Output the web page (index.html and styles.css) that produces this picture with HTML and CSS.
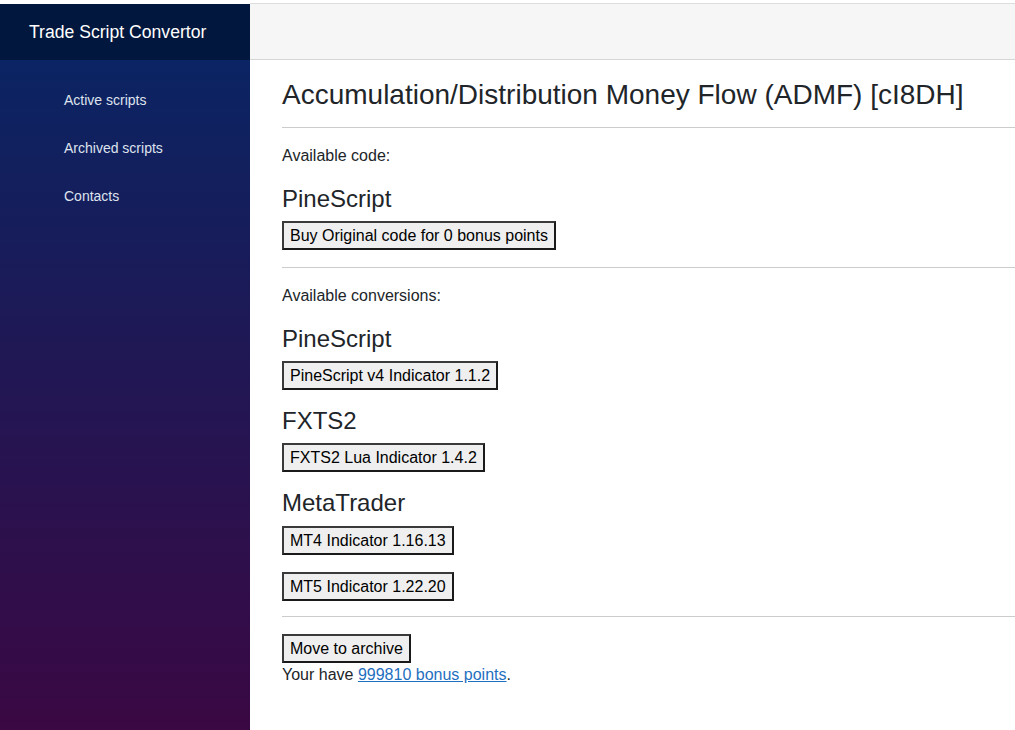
FILE: index.html
```html
<!DOCTYPE html>
<html lang="en">
<head>
<meta charset="utf-8">
<title>Trade Script Convertor</title>
<link rel="stylesheet" href="styles.css">
</head>
<body>
<div class="layout">
  <aside class="sidebar">
    <div class="brand">Trade Script Convertor</div>
    <nav class="nav">
      <a class="nav-link" href="#">Active scripts</a>
      <a class="nav-link" href="#">Archived scripts</a>
      <a class="nav-link" href="#">Contacts</a>
    </nav>
  </aside>
  <div class="main">
    <header class="topbar"></header>
    <main class="content">
      <h1 class="title">Accumulation/Distribution Money Flow (ADMF) [cI8DH]</h1>
      <hr class="rule">
      <p class="label">Available code:</p>
      <h3 class="platform">PineScript</h3>
      <div class="btn-row"><button class="btn">Buy Original code for 0 bonus points</button></div>
      <hr class="rule">
      <p class="label">Available conversions:</p>
      <h3 class="platform">PineScript</h3>
      <div class="btn-row"><button class="btn">PineScript v4 Indicator 1.1.2</button></div>
      <h3 class="platform">FXTS2</h3>
      <div class="btn-row"><button class="btn">FXTS2 Lua Indicator 1.4.2</button></div>
      <h3 class="platform">MetaTrader</h3>
      <div class="btn-row"><button class="btn">MT4 Indicator 1.16.13</button></div>
      <div class="btn-row btn-row-last"><button class="btn">MT5 Indicator 1.22.20</button></div>
      <hr class="rule">
      <div class="footer-row"><button class="btn">Move to archive</button></div>
      <div class="points">Your have <a class="link" href="#">999810 bonus points</a>.</div>
    </main>
  </div>
</div>
</body>
</html>
```

FILE: styles.css
```css
html, body {
  margin: 0;
  padding: 0;
  background: #ffffff;
  font-family: "Liberation Sans", Arial, sans-serif;
  color: #212529;
  overflow: hidden;
}

.layout {
  display: flex;
  padding-top: 3px;
  height: 727px;
}

.sidebar {
  width: 250px;
  flex: 0 0 250px;
  margin-top: 1px;
  display: flex;
  flex-direction: column;
}

.brand {
  height: 56px;
  background: #02173d;
  color: #ffffff;
  font-size: 17.6px;
  display: flex;
  align-items: center;
  padding-left: 29px;
  box-sizing: border-box;
}

.nav {
  flex: 1;
  background: linear-gradient(180deg, #0b2463 0%, #3a0843 100%);
  display: flex;
  flex-direction: column;
  padding-top: 32px;
  padding-left: 64px;
}

.nav-link {
  color: #dfe3ee;
  text-decoration: none;
  font-size: 14px;
  line-height: 16px;
  height: 48px;
}

.main {
  flex: 1;
  display: flex;
  flex-direction: column;
  min-width: 0;
}

.topbar {
  height: 55px;
  background: #f6f6f6;
  border-top: 1px solid #dddddd;
  border-bottom: 1px solid #d6d6d6;
}

.content {
  padding: 18px 0 0 32px;
}

.title {
  font-size: 28px;
  font-weight: 400;
  line-height: 1.2;
  margin: 0;
}

.rule {
  border: 0;
  border-top: 1px solid #cccccc;
  margin: 15px 0 17px;
  height: 0;
}

.label {
  font-size: 16px;
  line-height: 21px;
  margin: 0 0 19px;
}

.platform {
  font-size: 24px;
  font-weight: 400;
  line-height: 1.2;
  margin: 0 0 7.5px;
}

.btn-row {
  margin-bottom: 17px;
}

.btn-row-last {
  margin-bottom: 15px;
}

.footer-row {
  margin-bottom: 0;
}

.btn {
  font-family: "Liberation Sans", Arial, sans-serif;
  font-size: 16px;
  line-height: 19px;
  color: #000000;
  background: #efefef;
  padding: 3px 6px;
  border: 2px solid;
  border-color: #3a3a3a #1a1a1a #1a1a1a #3a3a3a;
  border-radius: 0;
  margin: 0;
}

.points {
  font-size: 16px;
  line-height: 23px;
}

.link {
  color: #1f6fbf;
  text-decoration: underline;
}
```
